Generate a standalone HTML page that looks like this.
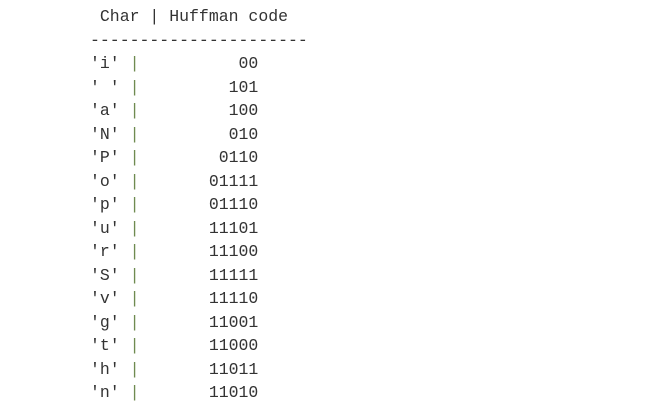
<!DOCTYPE html>
<html><head><style>
html,body{margin:0;padding:0;background:#fff;width:662px;height:411px;overflow:hidden}
pre{position:absolute;left:90px;top:5px;margin:0;font-family:"Liberation Mono",monospace;font-size:16.5px;line-height:23.5px;color:#333}
.p{color:#6f8a50}
</style></head><body>
<pre> Char | Huffman code
----------------------
'i' <span class="p">|</span>          00
' ' <span class="p">|</span>         101
'a' <span class="p">|</span>         100
'N' <span class="p">|</span>         010
'P' <span class="p">|</span>        0110
'o' <span class="p">|</span>       01111
'p' <span class="p">|</span>       01110
'u' <span class="p">|</span>       11101
'r' <span class="p">|</span>       11100
'S' <span class="p">|</span>       11111
'v' <span class="p">|</span>       11110
'g' <span class="p">|</span>       11001
't' <span class="p">|</span>       11000
'h' <span class="p">|</span>       11011
'n' <span class="p">|</span>       11010</pre>
</body></html>
